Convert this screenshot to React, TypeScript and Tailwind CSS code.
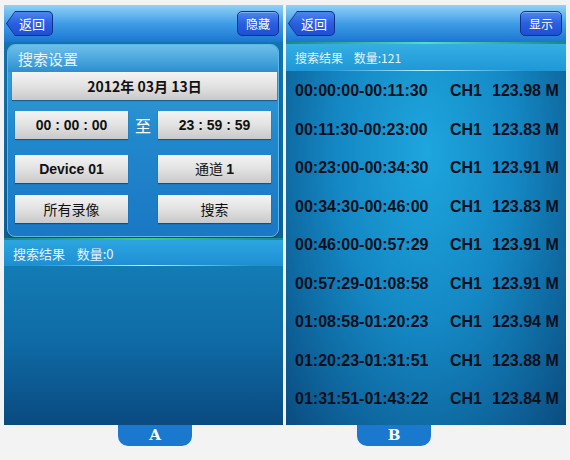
import React from "react";

const CJK = { fontFamily: '"Noto Sans CJK SC", "Liberation Sans", sans-serif' };
const NUM = { fontFamily: '"Liberation Sans", "Noto Sans CJK SC", sans-serif' };

function BackButton() {
  return (
    <div className="relative h-[25px] w-[47px]">
      <div className="absolute inset-0 bg-[#10308a] [clip-path:polygon(0_50%,9px_0,100%_0,100%_100%,9px_100%)] rounded-r-[5px]" />
      <div className="absolute inset-[1px] bg-gradient-to-b from-[#4d86ee] via-[#2a5fe0] to-[#1e4fd0] [clip-path:polygon(0_50%,8px_0,100%_0,100%_100%,8px_100%)] rounded-r-[4px] flex items-center justify-center pl-[5px]">
        <span className="text-white text-[13px] leading-none" style={CJK}>返回</span>
      </div>
    </div>
  );
}

function NavButton({ label }: { label: string }) {
  return (
    <div className="h-[25px] w-[42px] rounded-[5px] border border-[#10308a] bg-gradient-to-b from-[#4d86ee] via-[#2a5fe0] to-[#1e4fd0] flex items-center justify-center shadow-[inset_0_1px_0_rgba(255,255,255,0.35)]">
      <span className="text-white text-[12px] leading-none" style={CJK}>{label}</span>
    </div>
  );
}

function NavBar({ right }: { right: string }) {
  return (
    <div className="h-[37px] flex items-center justify-between pl-[2px] pr-[4px] bg-gradient-to-b from-[#8fd2f6] via-[#3f9de6] to-[#1a76d2]">
      <BackButton />
      <NavButton label={right} />
    </div>
  );
}

function GrayBtn({ children, className = "" }: { children: React.ReactNode; className?: string }) {
  return (
    <div
      className={`h-[28px] flex items-center justify-center bg-gradient-to-b from-[#f4f4f4] via-[#e2e2e2] to-[#c9c9c9] shadow-[0_1px_1px_rgba(0,0,0,0.35)] text-[#111] font-bold text-[14px] ${className}`}
    >
      {children}
    </div>
  );
}

const rows = [
  ["00:00:00-00:11:30", "123.98"],
  ["00:11:30-00:23:00", "123.83"],
  ["00:23:00-00:34:30", "123.91"],
  ["00:34:30-00:46:00", "123.83"],
  ["00:46:00-00:57:29", "123.91"],
  ["00:57:29-01:08:58", "123.91"],
  ["01:08:58-01:20:23", "123.94"],
  ["01:20:23-01:31:51", "123.88"],
  ["01:31:51-01:43:22", "123.84"],
];

function Tab({ label }: { label: string }) {
  return (
    <div className="w-[74px] h-[21px] rounded-b-[10px] bg-[#1a78cf] flex items-center justify-center">
      <span className="text-white text-[15px] font-bold leading-none" style={{ fontFamily: '"DejaVu Serif", "Liberation Serif", serif' }}>{label}</span>
    </div>
  );
}

export default function App() {
  return (
    <div className="w-[570px] h-[460px] bg-[#f3f3f3] pt-[5px] pl-[4px]" style={CJK}>
      <div className="flex gap-[3px]">
        {/* Panel A */}
        <div className="w-[279px] h-[420px] flex flex-col bg-gradient-to-b from-[#1577b4] to-[#0a4e86]">
          <NavBar right="隐藏" />
          <div className="mt-[2px] ml-[3px] mr-[4px] h-[193px] rounded-[8px] bg-gradient-to-b from-[#3aa4dc] via-[#2187cc] to-[#1a78c4] border border-[#5bb8e8] shadow-[0_1px_2px_rgba(0,0,0,0.3)] flex flex-col">
            <div className="h-[27px] flex items-center pl-[10px] rounded-t-[8px] bg-gradient-to-b from-[#6cc0ea] to-[#2a8fd0]">
              <span className="text-[#e8f4fc] text-[15px] leading-none">搜索设置</span>
            </div>
            <div className="pl-[4px] pr-[1px]">
              <GrayBtn className="w-[265px]">
                <span style={CJK}>2012年 03月 13日</span>
              </GrayBtn>
            </div>
            <div className="mt-[11px] pl-[7px] flex items-center">
              <GrayBtn className="w-[113px]"><span style={NUM}>00 : 00 : 00</span></GrayBtn>
              <div className="w-[30px] text-center text-white text-[16px]">至</div>
              <GrayBtn className="w-[113px]"><span style={NUM}>23 : 59 : 59</span></GrayBtn>
            </div>
            <div className="mt-[16px] pl-[7px] flex items-center">
              <GrayBtn className="w-[113px]"><span style={NUM}>Device 01</span></GrayBtn>
              <div className="w-[30px]" />
              <GrayBtn className="w-[113px]"><span className="font-normal" style={CJK}>通道 <b style={NUM}>1</b></span></GrayBtn>
            </div>
            <div className="mt-[12px] pl-[7px] flex items-center">
              <GrayBtn className="w-[113px]"><span className="font-normal" style={CJK}>所有录像</span></GrayBtn>
              <div className="w-[30px]" />
              <GrayBtn className="w-[113px]"><span className="font-normal" style={CJK}>搜索</span></GrayBtn>
            </div>
          </div>
          <div className="mt-[1px] h-[2px] bg-gradient-to-r from-[#1d8a7a] via-[#3fce7a] to-[#1d8a7a]" />
          <div className="relative h-[26px] flex items-center pl-[9px] bg-gradient-to-b from-[#2ca6e0] to-[#1d8fd4]">
            <span className="text-[#e6f3fb] text-[13px] leading-none">搜索结果&nbsp;&nbsp;&nbsp;&nbsp;数量:0</span>
            <div className="absolute left-[30px] right-[30px] bottom-0 h-[1px] bg-gradient-to-r from-transparent via-[#c8f0ff] to-transparent" />
          </div>
          <div className="flex-1 bg-gradient-to-b from-[#137cb4] via-[#0f69a4] to-[#0a4a80]" />
        </div>

        {/* Panel B */}
        <div className="w-[280px] h-[420px] flex flex-col bg-[radial-gradient(ellipse_at_50%_35%,#1ea6de_0%,#1488c4_45%,#0a4c80_100%)]">
          <NavBar right="显示" />
          <div className="h-[2px] bg-gradient-to-r from-[#1d8a7a] via-[#52e0c0] to-[#1d8a7a]" />
          <div className="relative h-[27px] flex items-center pl-[9px] bg-gradient-to-b from-[#34aee4] to-[#1e98d6]">
            <span className="text-[#e6f3fb] text-[12px] leading-none">搜索结果&nbsp;&nbsp;&nbsp;&nbsp;数量:121</span>
            <div className="absolute left-[40px] right-[40px] bottom-0 h-[1px] bg-gradient-to-r from-transparent via-[#bfefff] to-transparent" />
          </div>
          <div className="flex flex-col pt-[1px]" style={NUM}>
            {rows.map(([t, s]) => (
              <div key={t} className="h-[38.5px] flex items-center pl-[9px] text-[#0a0f1c] font-bold text-[16px]">
                <span className="w-[155px]">{t}</span>
                <span className="w-[42px]">CH1</span>
                <span>{s} M</span>
              </div>
            ))}
          </div>
        </div>
      </div>
      <div className="flex">
        <div className="ml-[114px]"><Tab label="A" /></div>
        <div className="ml-[165px]"><Tab label="B" /></div>
      </div>
    </div>
  );
}
